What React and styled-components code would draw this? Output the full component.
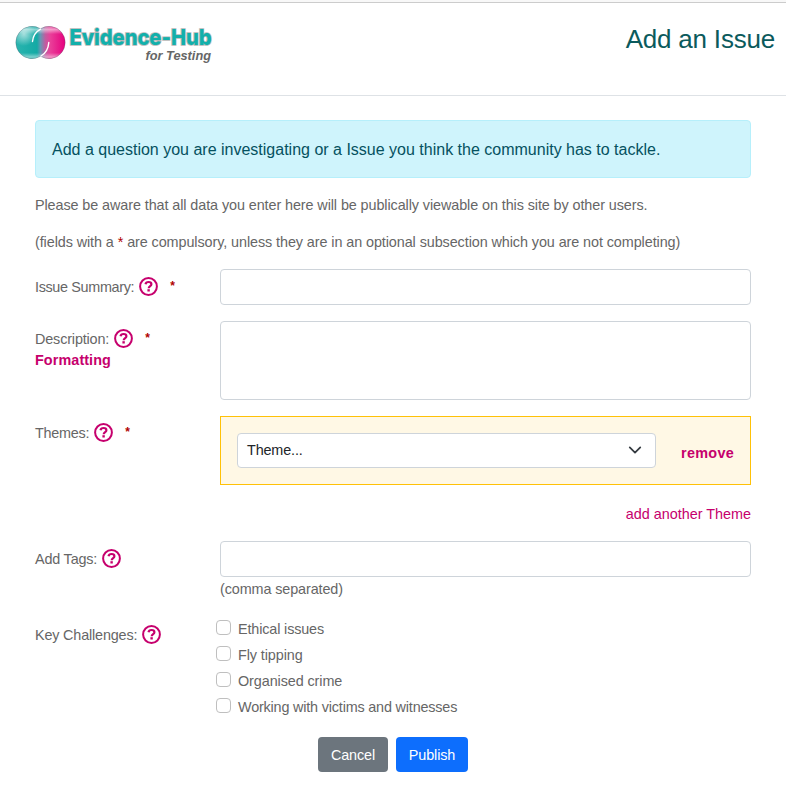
import React from "react";
import styled, { createGlobalStyle } from "styled-components";

const GlobalStyle = createGlobalStyle`
  *, *::before, *::after { box-sizing: border-box; }
  body {
    margin: 0;
    background: #fff;
    color: #666;
    font: 14.4px/21.6px "Liberation Sans", Arial, sans-serif;
  }
`;

const Page = styled.div`
  min-height: 805px;
  border-top: 2px solid #f8f8f8;
`;

const Header = styled.header`
  display: flex;
  justify-content: space-between;
  align-items: flex-start;
  height: 94px;
  padding: 19px 11px 0 14px;
  border-top: 1px solid #ccc;
  border-bottom: 1px solid #dee2e6;
`;

const LogoArt = styled.svg`
  display: block;
  width: 204px;
  height: 46px;
  overflow: visible;
`;

const Title = styled.h1`
  margin: 0;
  color: #0b5a5c;
  font-size: 26px;
  font-weight: 400;
  line-height: 34px;
  letter-spacing: -0.2px;
`;

const Main = styled.main`
  padding: 24px 35px 0;
`;

const Notice = styled.div`
  height: 58px;
  padding: 16px;
  border: 1px solid #b6effb;
  border-radius: 4px;
  background: #cff4fc;
  color: #055160;
  font-size: 16px;
  line-height: 25px;
`;

const Intro = styled.p`
  margin: ${(p) => p.$gap}px 0 0;
  line-height: 21px;
  letter-spacing: ${(p) => p.$tracking}px;
  white-space: nowrap;
`;

const Star = styled.span`
  color: #b00000;
`;

const Row = styled.div`
  display: grid;
  grid-template-columns: 185px 1fr;
  margin-top: ${(p) => p.$gap}px;
`;

const LabelCell = styled.div`
  padding-top: ${(p) => p.$top ?? 8}px;
`;

const HelpArt = styled.svg`
  flex: none;
  width: 19px;
  height: 19px;
  margin: -3px 0 0 5px;
  fill: none;
  stroke: #c6006d;
`;

const LabelLine = styled.label`
  display: flex;
  align-items: center;
  height: 21px;
  white-space: pre;
  letter-spacing: ${(p) => p.$tracking}px;

  ${Star} {
    margin: -2px 0 0 12px;
    font-size: 12px;
    font-weight: 700;
  }
`;

const TextLink = styled.a`
  color: #c6006d;
  font-weight: ${(p) => (p.$bold ? 700 : 400)};
  letter-spacing: ${(p) => p.$tracking ?? 0}px;
  text-decoration: none;
`;

const Input = styled.input`
  display: block;
  width: 100%;
  height: 36px;
  padding: 6px 12px;
  border: 1px solid #ced4da;
  border-radius: 4px;
  background: #fff;
  font: inherit;
  outline: 0;
`;

const TextArea = styled.textarea`
  display: block;
  width: 100%;
  height: 79px;
  border: 1px solid #ced4da;
  border-radius: 4px;
  font: inherit;
  resize: none;
  outline: 0;
`;

const ThemeBox = styled.div`
  display: flex;
  align-items: center;
  justify-content: space-between;
  height: 69px;
  padding: 0 16px;
  border: 1px solid #ffc107;
  background: #fff8e5;

  ${TextLink} { padding-top: 6px; }
`;

const Select = styled.button`
  display: flex;
  align-items: center;
  justify-content: space-between;
  width: 419px;
  height: 35px;
  padding: 0 13px 0 9px;
  border: 1px solid #ced4da;
  border-radius: 4px;
  background: #fff;
  color: #212529;
  font: inherit;
  letter-spacing: -0.15px;
`;

const Chevron = styled.svg`
  width: 14px;
  height: 14px;
  margin-top: -2px;
  fill: none;
  stroke: #343a40;
`;

const AddLine = styled.div`
  margin-top: 18px;
  text-align: right;
  line-height: 22px;
`;

const Hint = styled.div`
  margin-top: 2px;
  line-height: 21px;
  letter-spacing: -0.11px;
`;

const Option = styled.label`
  display: flex;
  align-items: center;
  height: 26px;
  margin-left: -4px;
  letter-spacing: ${(p) => p.$tracking}px;
`;

const OptionText = styled.span`
  padding-top: 2px;
`;

const CheckBox = styled.input`
  appearance: none;
  width: 15px;
  height: 15px;
  margin: -3px 7px 0 0;
  border: 1px solid #bfbfbf;
  border-radius: 4px;
  background: #fff;
`;

const Actions = styled.div`
  display: flex;
  justify-content: center;
  gap: 8px;
  margin-top: 17px;
`;

const Button = styled.button`
  width: ${(p) => (p.$primary ? 72 : 70)}px;
  height: 35px;
  padding: 2px 0 0;
  border: 0;
  border-radius: 4px;
  background: ${(p) => (p.$primary ? "#0d6efd" : "#6c757d")};
  color: #fff;
  font: inherit;
  letter-spacing: -0.12px;
`;

const Logo = () => (
  <LogoArt viewBox="0 0 204 46" role="img" aria-label="Evidence-Hub for Testing">
    <defs>
      <linearGradient id="spheres" gradientUnits="userSpaceOnUse" x1="1.8" y1="0" x2="51.2" y2="0">
        <stop offset="0" stopColor="#2ab4af" />
        <stop offset="0.43" stopColor="#14aaa5" />
        <stop offset="0.5" stopColor="#6796b3" />
        <stop offset="0.6" stopColor="#c25ba0" />
        <stop offset="0.7" stopColor="#e93f99" />
        <stop offset="1" stopColor="#e6007e" />
      </linearGradient>
      <radialGradient id="glow" gradientUnits="userSpaceOnUse" cx="10" cy="12" r="12">
        <stop offset="0" stopColor="#fff" stopOpacity="0.6" />
        <stop offset="1" stopColor="#fff" stopOpacity="0" />
      </radialGradient>
      <linearGradient id="shine" x1="0" y1="0" x2="0" y2="1">
        <stop offset="0" stopColor="#fff" stopOpacity="0.15" />
        <stop offset="0.1" stopColor="#fff" stopOpacity="0.5" />
        <stop offset="0.24" stopColor="#fff" stopOpacity="0" />
        <stop offset="0.82" stopColor="#fff" stopOpacity="0" />
        <stop offset="0.95" stopColor="#fff" stopOpacity="0.45" />
        <stop offset="1" stopColor="#fff" stopOpacity="0.2" />
      </linearGradient>
      <path id="pair" d="M26.5 6.7A16.2 16.2 0 1 0 26.5 34.3A16.2 16.2 0 1 0 26.5 6.7Z" />
    </defs>
    <use href="#pair" fill="url(#spheres)" />
    <use href="#pair" fill="url(#glow)" />
    <use href="#pair" fill="url(#shine)" stroke="#556" strokeOpacity="0.5" strokeWidth="0.6" />
    <path d="M18.5 19.5C19 14 21.5 10 26.5 7.2M34.8 20.5C34.3 27 31.5 31.5 27 34" fill="none" stroke="#fff" strokeWidth="1.4" strokeLinecap="round" />
    <text x="55.5" y="23" fontFamily="Inter, sans-serif" fontWeight="800" fontSize="21.5" textLength="142" lengthAdjust="spacingAndGlyphs" fill="#12b0ab" stroke="#b8b8b8" strokeWidth="1.6" paintOrder="stroke">Evidence-Hub</text>
    <text x="131.5" y="38" fontFamily="Liberation Sans, Arial, sans-serif" fontWeight="700" fontSize="12.5" fontStyle="italic" textLength="65.5" lengthAdjust="spacingAndGlyphs" fill="#666">for Testing</text>
  </LogoArt>
);

const HelpIcon = () => (
  <HelpArt viewBox="0 0 19 19" aria-label="Help">
    <circle cx="9.5" cy="9.5" r="8.4" strokeWidth="2" />
    <path d="M6.5 7.3C6.8 5.6 7.9 5 9.6 5C11.3 5 12.4 5.9 12.4 7.2C12.4 9.1 9.7 9 9.7 11.2" strokeWidth="2.2" />
    <path d="M9.6 12.2V14.5" strokeWidth="2.4" />
  </HelpArt>
);

const FieldLabel = ({ text, tracking, required }) => (
  <LabelLine $tracking={tracking}>
    {text}
    <HelpIcon />
    {required && <Star>*</Star>}
  </LabelLine>
);

const challenges = [
  { name: "Ethical issues", tracking: -0.14 },
  { name: "Fly tipping", tracking: -0.09 },
  { name: "Organised crime", tracking: -0.09 },
  { name: "Working with victims and witnesses", tracking: -0.18 },
];

export default function App() {
  return (
    <Page>
      <GlobalStyle />
      <Header>
        <Logo />
        <Title>Add an Issue</Title>
      </Header>
      <Main>
        <Notice>Add a question you are investigating or a Issue you think the community has to tackle.</Notice>
        <Intro $gap={17} $tracking={-0.09}>Please be aware that all data you enter here will be publically viewable on this site by other users.</Intro>
        <Intro $gap={16} $tracking={-0.085}>
          (fields with a <Star>*</Star> are compulsory, unless they are in an optional subsection which you are not completing)
        </Intro>
        <Row $gap={16}>
          <LabelCell>
            <FieldLabel text="Issue Summary:" tracking={-0.34} required />
          </LabelCell>
          <Input />
        </Row>
        <Row $gap={16}>
          <LabelCell>
            <FieldLabel text="Description:" tracking={-0.15} required />
            <TextLink $bold $tracking={0.08}>Formatting</TextLink>
          </LabelCell>
          <TextArea />
        </Row>
        <Row $gap={16}>
          <LabelCell $top={7}>
            <FieldLabel text="Themes:" tracking={-0.25} required />
          </LabelCell>
          <ThemeBox>
            <Select type="button">
              Theme...
              <Chevron viewBox="0 0 16 16">
                <path d="m2 5 6 6 6-6" strokeWidth="2" strokeLinecap="round" strokeLinejoin="round" />
              </Chevron>
            </Select>
            <TextLink $bold $tracking={0.3}>remove</TextLink>
          </ThemeBox>
        </Row>
        <AddLine>
          <TextLink>add another Theme</TextLink>
        </AddLine>
        <Row $gap={16}>
          <LabelCell>
            <FieldLabel text="Add Tags:" tracking={-0.18} />
          </LabelCell>
          <div>
            <Input />
            <Hint>(comma separated)</Hint>
          </div>
        </Row>
        <Row $gap={16}>
          <LabelCell $top={9}>
            <FieldLabel text="Key Challenges:" tracking={-0.17} />
          </LabelCell>
          <div>
            {challenges.map(({ name, tracking }) => (
              <Option key={name} $tracking={tracking}>
                <CheckBox type="checkbox" />
                <OptionText>{name}</OptionText>
              </Option>
            ))}
          </div>
        </Row>
        <Actions>
          <Button>Cancel</Button>
          <Button $primary>Publish</Button>
        </Actions>
      </Main>
    </Page>
  );
}
